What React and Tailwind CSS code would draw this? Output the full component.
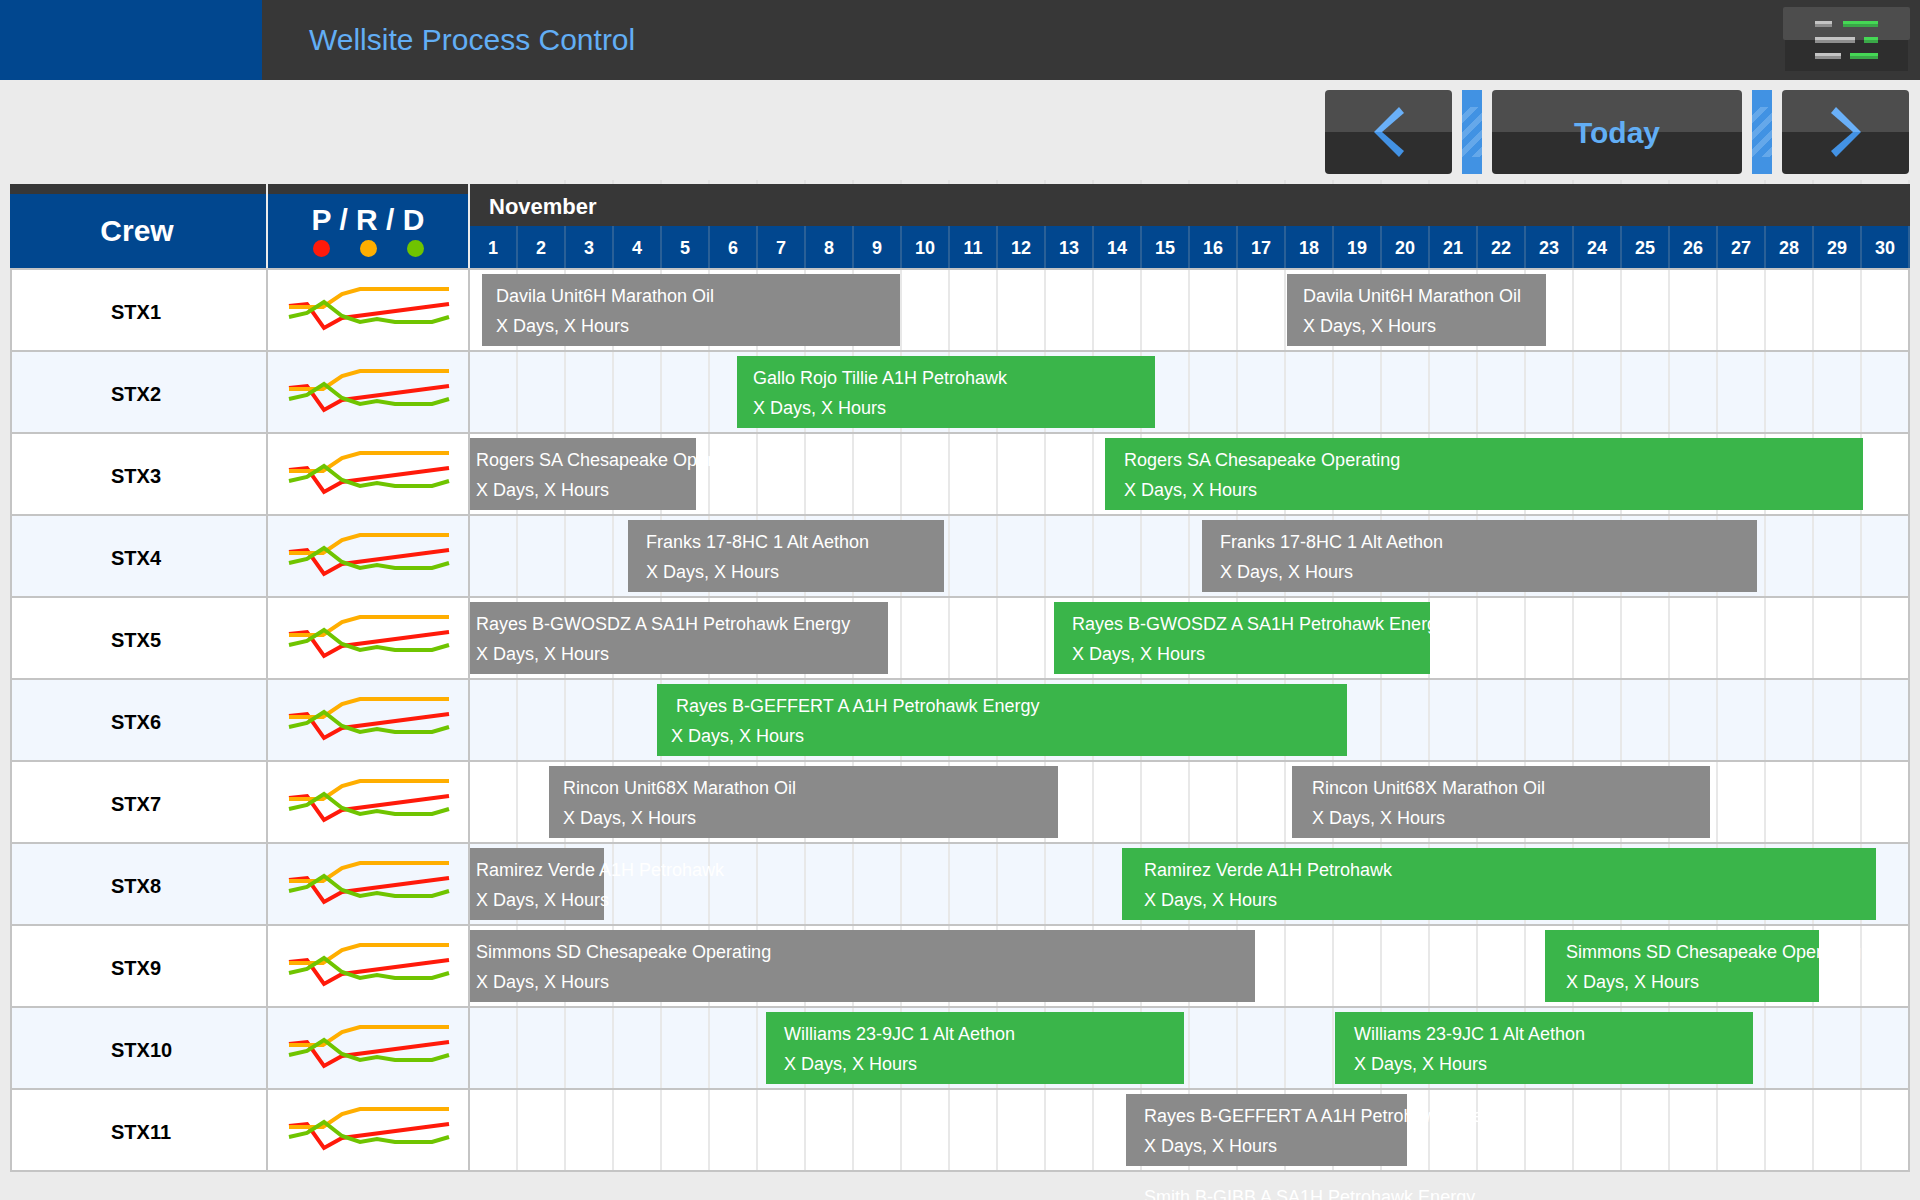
import React from 'react'

const days = Array.from({ length: 30 }, (_, i) => i + 1)

const GRAY = 'bg-[#8a8a8a]'
const GREEN = 'bg-[#3ab54a]'

// x / end are in page pixels, pad / pad2 = text inset of the two lines
const rows = [
  { name: 'STX1', bars: [
    { x: 482, end: 900, color: GRAY, pad: 14, title: 'Davila Unit6H Marathon Oil' },
    { x: 1287, end: 1546, color: GRAY, pad: 16, title: 'Davila Unit6H Marathon Oil' },
  ] },
  { name: 'STX2', bars: [
    { x: 737, end: 1155, color: GREEN, pad: 16, title: 'Gallo Rojo Tillie A1H Petrohawk' },
  ] },
  { name: 'STX3', bars: [
    { x: 470, end: 696, color: GRAY, pad: 6, title: 'Rogers SA Chesapeake Operating' },
    { x: 1105, end: 1863, color: GREEN, pad: 19, title: 'Rogers SA Chesapeake Operating' },
  ] },
  { name: 'STX4', bars: [
    { x: 628, end: 944, color: GRAY, pad: 18, title: 'Franks 17-8HC 1 Alt Aethon' },
    { x: 1202, end: 1757, color: GRAY, pad: 18, title: 'Franks 17-8HC 1 Alt Aethon' },
  ] },
  { name: 'STX5', bars: [
    { x: 470, end: 888, color: GRAY, pad: 6, title: 'Rayes B-GWOSDZ A SA1H Petrohawk Energy' },
    { x: 1054, end: 1430, color: GREEN, pad: 18, title: 'Rayes B-GWOSDZ A SA1H Petrohawk Energy' },
  ] },
  { name: 'STX6', bars: [
    { x: 657, end: 1347, color: GREEN, pad: 19, pad2: 14, title: 'Rayes B-GEFFERT A A1H Petrohawk Energy' },
  ] },
  { name: 'STX7', bars: [
    { x: 549, end: 1058, color: GRAY, pad: 14, title: 'Rincon Unit68X Marathon Oil' },
    { x: 1292, end: 1710, color: GRAY, pad: 20, title: 'Rincon Unit68X Marathon Oil' },
  ] },
  { name: 'STX8', bars: [
    { x: 470, end: 604, color: GRAY, pad: 6, title: 'Ramirez Verde A1H Petrohawk' },
    { x: 1122, end: 1876, color: GREEN, pad: 22, title: 'Ramirez Verde A1H Petrohawk' },
  ] },
  { name: 'STX9', bars: [
    { x: 470, end: 1255, color: GRAY, pad: 6, title: 'Simmons SD Chesapeake Operating' },
    { x: 1545, end: 1819, color: GREEN, pad: 21, title: 'Simmons SD Chesapeake Operating' },
  ] },
  { name: 'STX10', bars: [
    { x: 766, end: 1184, color: GREEN, pad: 18, title: 'Williams 23-9JC 1 Alt Aethon' },
    { x: 1335, end: 1753, color: GREEN, pad: 19, title: 'Williams 23-9JC 1 Alt Aethon' },
  ] },
  { name: 'STX11', bars: [
    { x: 1126, end: 1407, color: GRAY, pad: 18, title: 'Rayes B-GEFFERT A A1H Petrohawk Energy' },
  ] },
]

const Sparkline = () => (
  <svg width="196" height="80" viewBox="0 0 196 80" fill="none" strokeWidth="4" strokeLinejoin="miter">
    <polyline stroke="#ff1a0a" points="19,36 37,34 54,58 72,48 179,34" />
    <polyline stroke="#ffae00" points="19,37 53,37 72,24 90,19 179,19" />
    <polyline stroke="#6fc400" points="19,47 37,43 54,32 72,46 90,52 107,49 125,52 162,52 179,47" />
  </svg>
)

const GanttIcon = () => (
  <svg width="127" height="64" viewBox="0 0 127 64">
    <rect x="2" y="33" width="123" height="31" fill="#2e2e2e" />
    <rect x="0" y="0" width="127" height="33" rx="2" fill="#4d4d4d" />
    <rect x="32" y="14" width="17" height="3" fill="#c4c4c4" />
    <rect x="32" y="17" width="17" height="3" fill="#8e8e8e" />
    <rect x="60" y="14" width="35" height="3" fill="#45d855" />
    <rect x="60" y="17" width="35" height="3" fill="#3aa848" />
    <rect x="32" y="30" width="40" height="3" fill="#c4c4c4" />
    <rect x="32" y="33" width="40" height="3" fill="#8e8e8e" />
    <rect x="81" y="30" width="14" height="3" fill="#45d855" />
    <rect x="81" y="33" width="14" height="3" fill="#3aa848" />
    <rect x="32" y="46" width="26" height="3" fill="#c4c4c4" />
    <rect x="32" y="49" width="26" height="3" fill="#8e8e8e" />
    <rect x="67" y="46" width="28" height="3" fill="#45d855" />
    <rect x="67" y="49" width="28" height="3" fill="#3aa848" />
  </svg>
)

const Chevron = ({ right }) => (
  <svg width="30" height="50" viewBox="0 0 30 50" className={right ? '-scale-x-100' : ''}>
    <polygon points="0,25 25,0 30,6 8,25" fill="#6ab0f8" />
    <polygon points="0,25 8,25 30,44 25,50" fill="#4392e4" />
  </svg>
)

const NavButton = ({ width, children }) => (
  <div className={`${width} h-[84px] rounded relative overflow-hidden flex items-center justify-center bg-[linear-gradient(#4d4d4d_50%,#2e2e2e_50%)]`}>
    {children}
  </div>
)

const Stripe = () => (
  <div className="w-[20px] h-[84px] bg-[#4192e3] flex items-center">
    <div className="w-full h-[50px] bg-[repeating-linear-gradient(135deg,#4192e3_0px,#4192e3_6px,#65a8ea_6px,#65a8ea_12px)]" />
  </div>
)

const Bar = ({ bar }) => (
  <div
    className={`absolute top-[4px] h-[72px] pt-[7px] text-white text-[18px] leading-[30px] whitespace-nowrap ${bar.color}`}
    style={{ left: bar.x - 470, width: bar.end - bar.x }}
  >
    <div style={{ paddingLeft: bar.pad }}>{bar.title}</div>
    <div style={{ paddingLeft: bar.pad2 ?? bar.pad }}>X Days, X Hours</div>
  </div>
)

const App = () => {
  return (
    <div className="h-[1200px] overflow-hidden bg-[#ebebeb] font-['Liberation_Sans',Arial,sans-serif]">
      {/* Top bar */}
      <header className="h-[80px] bg-[#373737] flex pr-[10px]">
        <div className="w-[262px] bg-[#01478f]" />
        <h1 className="flex-1 pl-[47px] pt-[21px] text-[30px] leading-[38px] font-normal text-[#62aef5]">
          Wellsite Process Control
        </h1>
        <div className="pt-[7px]">
          <GanttIcon />
        </div>
      </header>

      {/* Prev / today / next */}
      <div className="h-[100px] pt-[10px] pr-[11px] flex justify-end gap-[10px]">
        <NavButton width="w-[127px]"><Chevron /></NavButton>
        <Stripe />
        <NavButton width="w-[250px]">
          <span className="text-[30px] font-bold text-[#62aef5] pt-[1px]">Today</span>
        </NavButton>
        <Stripe />
        <NavButton width="w-[127px]"><Chevron right /></NavButton>
      </div>

      <div className="h-[4px] ml-[470px] mr-[10px] flex">
        {days.map((d) => (
          <div key={d} className="w-[48px] border-r-2 border-[#e2e2e2]" />
        ))}
      </div>

      {/* Table head */}
      <div className="mx-[10px] flex h-[84px] gap-[2px]">
        <div className="w-[256px] flex flex-col">
          <div className="h-[10px] bg-[#373737]" />
          <div className="flex-1 bg-[#01478f] flex items-center justify-center text-white text-[30px] font-bold pb-[2px] pr-[2px]">
            Crew
          </div>
        </div>
        <div className="w-[200px] flex flex-col">
          <div className="h-[10px] bg-[#373737]" />
          <div className="flex-1 bg-[#01478f] flex flex-col items-center text-white pt-[9px]">
            <div className="text-[30px] leading-[34px] font-bold">P / R / D</div>
            <div className="flex gap-[30px] mt-[3px]">
              <span className="w-[17px] h-[17px] rounded-full bg-[#ff1a0a]" />
              <span className="w-[17px] h-[17px] rounded-full bg-[#ffae00]" />
              <span className="w-[17px] h-[17px] rounded-full bg-[#6fc400]" />
            </div>
          </div>
        </div>
        <div className="flex-1 flex flex-col">
          <div className="h-[42px] bg-[#373737] pl-[19px] pt-[2px] flex items-center text-white text-[22px] font-bold">
            November
          </div>
          <div className="h-[42px] bg-[#01478f] flex">
            {days.map((d) => (
              <div key={d} className="w-[48px] border-r-2 border-[#2a6097] pt-[2px] flex items-center justify-center text-white text-[18px] font-bold">
                {d}
              </div>
            ))}
          </div>
        </div>
      </div>

      {/* Crew rows */}
      <div className="mx-[10px] border-t-2 border-[#c4c4c4]">
        {rows.map((row, i) => (
          <div key={row.name} className={`flex h-[82px] border-b-2 border-[#c4c4c4] ${i % 2 ? 'bg-[#f2f7fe]' : 'bg-white'}`}>
            <div className="w-[258px] border-x-2 border-[#c4c4c4] pl-[99px] pt-[3px] flex items-center text-[20px] font-bold text-black">
              {row.name}
            </div>
            <div className="w-[202px] border-r-2 border-[#c4c4c4] pl-[2px]">
              <Sparkline />
            </div>
            <div className="flex-1 relative flex">
              {days.map((d) => (
                <div key={d} className={`w-[48px] border-r-2 ${d === 30 ? 'border-[#c4c4c4]' : 'border-[#e8e8e8]'}`} />
              ))}
              {row.bars.map((bar) => (
                <Bar key={bar.x} bar={bar} />
              ))}
            </div>
          </div>
        ))}
        {/* next crew runs off the page, only its label shows */}
        <div className="relative h-[82px] text-white text-[18px] leading-[30px] pl-[1134px] pt-[10px] whitespace-nowrap">
          Smith B-GIBB A SA1H Petrohawk Energy
        </div>
      </div>
    </div>
  )
}

export default App
